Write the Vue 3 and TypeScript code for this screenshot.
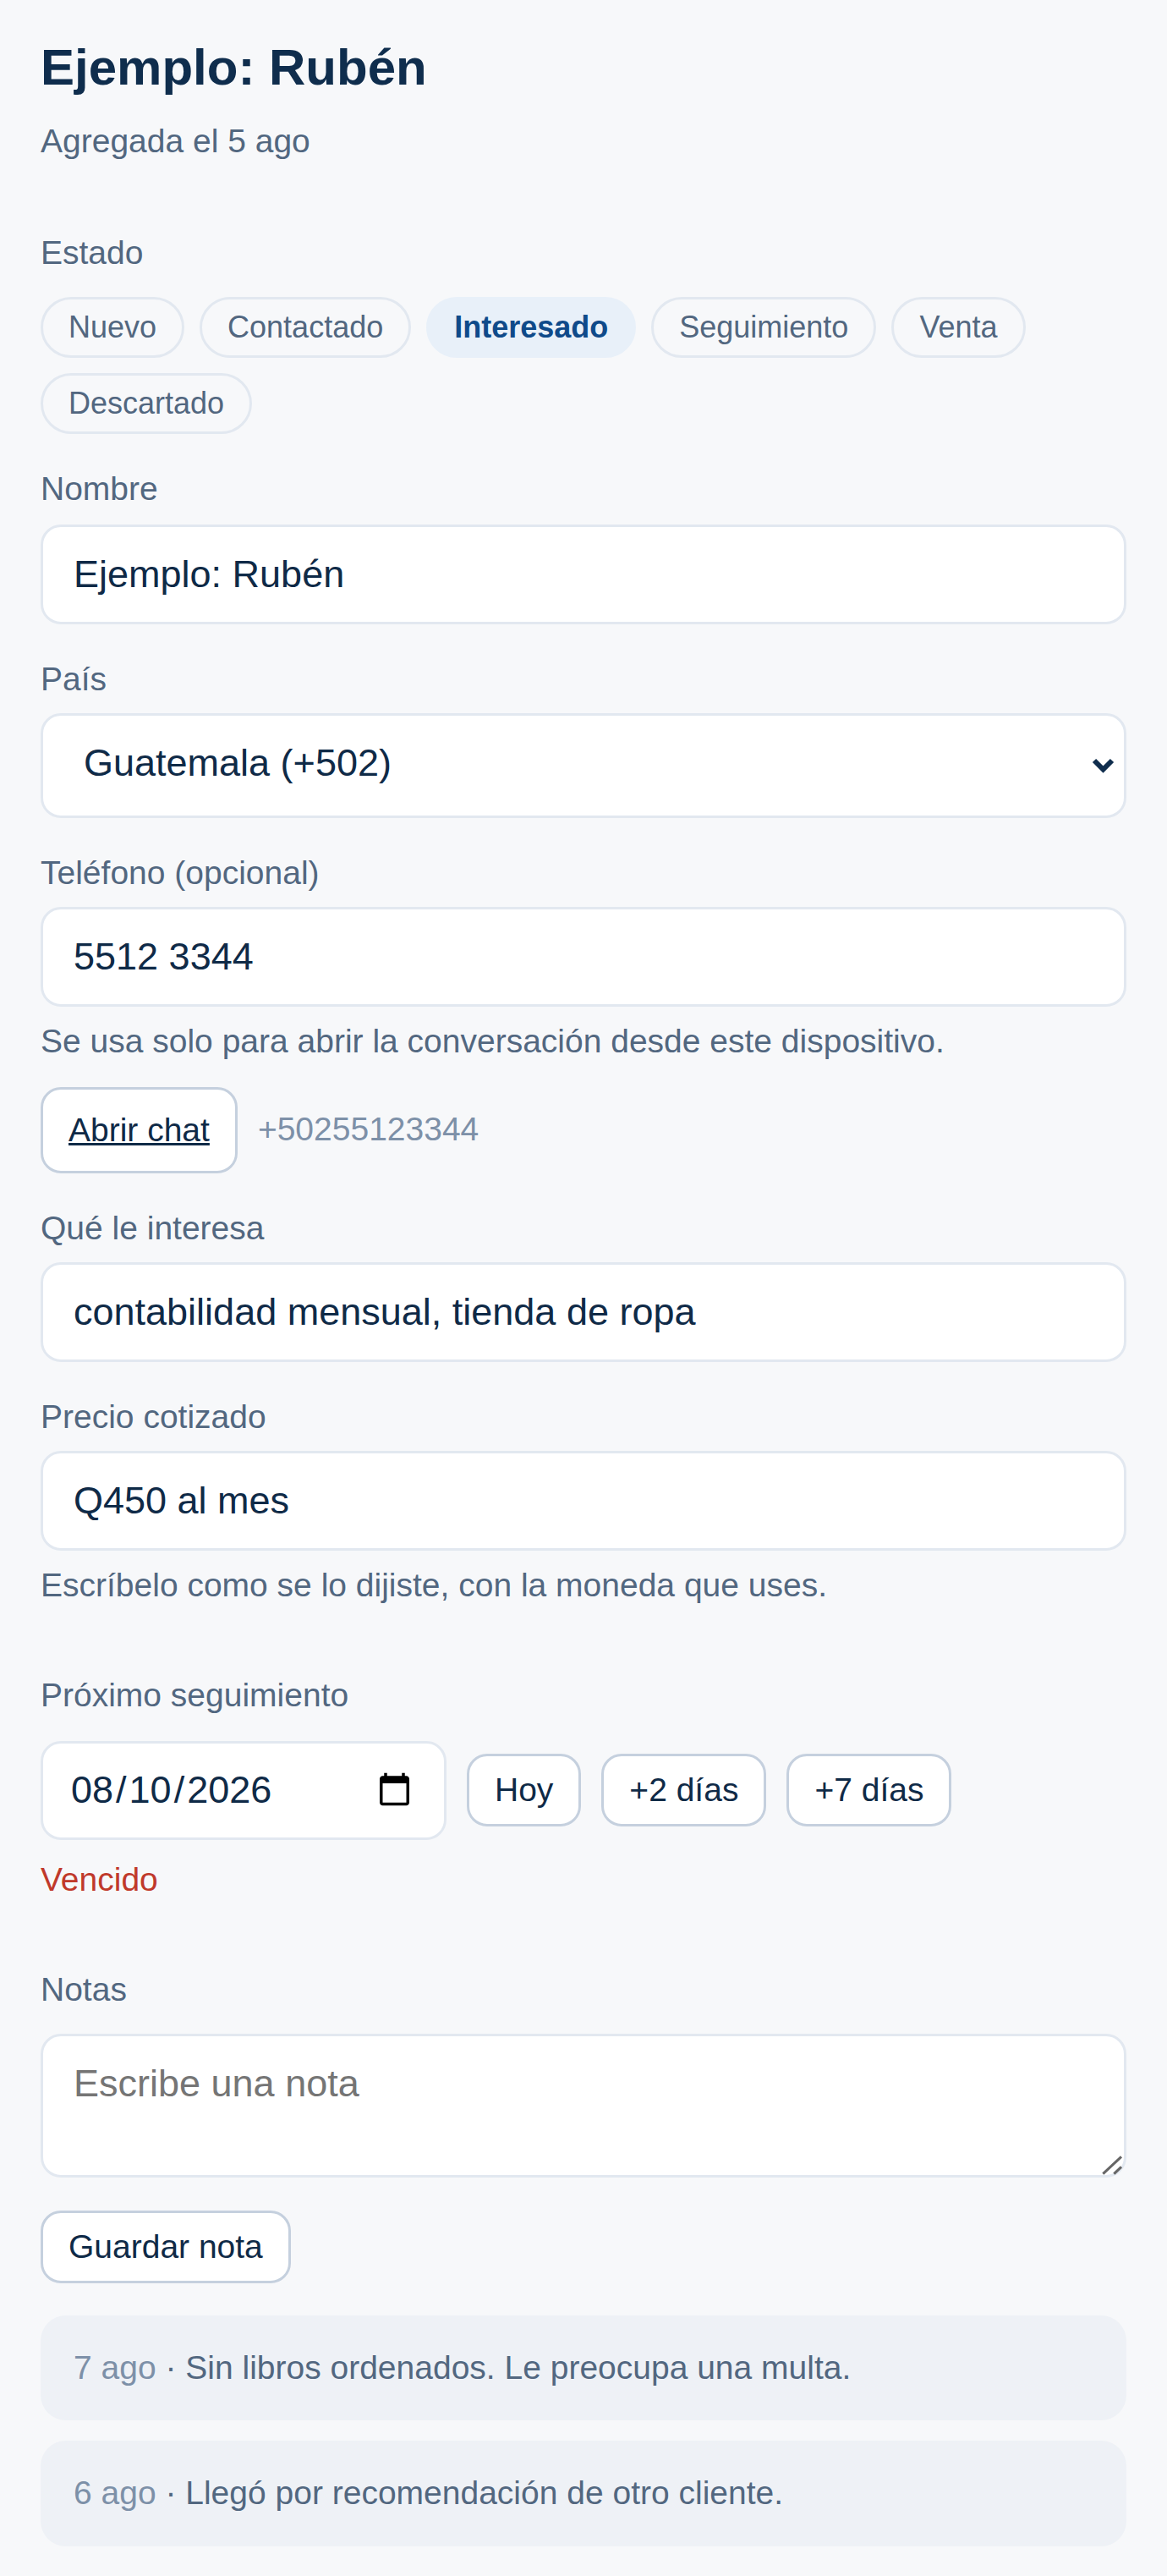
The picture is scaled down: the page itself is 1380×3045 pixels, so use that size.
<script setup lang="ts">
import { ref } from 'vue'

const estados: string[] = ['Nuevo', 'Contactado', 'Interesado', 'Seguimiento', 'Venta', 'Descartado']
const activo = ref<string>('Interesado')
const nombre = ref<string>('Ejemplo: Rubén')
const pais = ref<string>('502')
const telefono = ref<string>('5512 3344')
const interes = ref<string>('contabilidad mensual, tienda de ropa')
const precio = ref<string>('Q450 al mes')
const fecha = ref<string>('2026-08-10')
const nota = ref<string>('')
const notas = [
  { fecha: '7 ago', texto: 'Sin libros ordenados. Le preocupa una multa.' },
  { fecha: '6 ago', texto: 'Llegó por recomendación de otro cliente.' }
]
</script>

<template>
  <main class="page">
    <h1 class="title">Ejemplo: Rubén</h1>
    <p class="subtitle">Agregada el 5 ago</p>

    <section class="section section-state">
      <div class="label section-label">Estado</div>
      <div class="chips">
        <button
          v-for="e in estados"
          :key="e"
          type="button"
          class="chip"
          :class="{ 'chip-on': e === activo }"
          @click="activo = e"
        >{{ e }}</button>
      </div>
    </section>

    <label class="field">
      <span class="label label-first">Nombre</span>
      <input v-model="nombre" class="control" type="text" />
    </label>

    <label class="field">
      <span class="label">País</span>
      <span class="select-wrap">
        <select v-model="pais" class="control control-select">
          <option value="502">Guatemala (+502)</option>
        </select>
        <svg class="select-arrow" viewBox="0 0 27 18" aria-hidden="true">
          <path d="M3 3 L13.5 13.5 L24 3" fill="none" stroke="currentColor" stroke-width="6" />
        </svg>
      </span>
    </label>

    <label class="field">
      <span class="label">Teléfono (opcional)</span>
      <input v-model="telefono" class="control" type="tel" />
    </label>
    <p class="hint">Se usa solo para abrir la conversación desde este dispositivo.</p>
    <div class="chat-row">
      <a class="btn btn-link" href="#" @click.prevent>Abrir chat</a>
      <span class="phone">+50255123344</span>
    </div>

    <label class="field">
      <span class="label">Qué le interesa</span>
      <input v-model="interes" class="control" type="text" />
    </label>

    <label class="field">
      <span class="label">Precio cotizado</span>
      <input v-model="precio" class="control" type="text" />
    </label>
    <p class="hint">Escríbelo como se lo dijiste, con la moneda que uses.</p>

    <section class="section">
      <div class="label section-label section-label-date">Próximo seguimiento</div>
      <div class="date-row">
        <input v-model="fecha" class="control control-date" type="date" />
        <button type="button" class="btn">Hoy</button>
        <button type="button" class="btn">+2 días</button>
        <button type="button" class="btn">+7 días</button>
      </div>
      <p class="overdue">Vencido</p>
    </section>

    <section class="section">
      <div class="label section-label">Notas</div>
      <div class="area-wrap">
        <textarea v-model="nota" class="control control-area" rows="2" placeholder="Escribe una nota"></textarea>
        <svg class="area-grip" viewBox="0 0 30 30" aria-hidden="true">
          <path d="M2.3 25.7 L24 5.3 M15.3 25.7 L24 17.3" fill="none" stroke="#666" stroke-width="3" />
        </svg>
      </div>
      <button type="button" class="btn save">Guardar nota</button>
      <ul class="notes">
        <li v-for="n in notas" :key="n.fecha" class="note">
          <span class="note-date">{{ n.fecha }}</span> · {{ n.texto }}
        </li>
      </ul>
    </section>
  </main>
</template>

<style scoped>
.page {
  zoom: 3;
  width: 460px;
  box-sizing: border-box;
  padding: 12px 16px;
  font-family: "Liberation Sans", Arial, sans-serif;
  font-size: 13px;
  line-height: 1.5;
  color: #0f2a47;
}
.title {
  margin: 0 0 5px;
  font-size: 20px;
  font-weight: 700;
  line-height: 29px;
  color: #0f2d4d;
}
.subtitle {
  margin: 0;
  color: #526780;
}
.section {
  margin-top: 24px;
}
.section-state {
  margin-top: 24.5px;
}
.label {
  display: block;
  margin-bottom: 4px;
  line-height: 19px;
  color: #526780;
}
.label-first {
  margin-bottom: 4.5px;
}
.section-label {
  margin-bottom: 8px;
}
.section-label-date {
  margin-bottom: 8.5px;
}
.chips {
  display: flex;
  flex-wrap: wrap;
  gap: 6px;
}
.chip {
  padding: 4px 10px;
  border: 1px solid #e2e8f0;
  border-radius: 999px;
  background: transparent;
  color: #526780;
  font-family: inherit;
  font-size: 12px;
}
.chip-on {
  border-color: #e8f0f9;
  background: #e8f0f9;
  color: #0f4a8a;
  font-weight: 700;
}
.field {
  display: block;
  margin-top: 12px;
}
.control {
  display: block;
  box-sizing: border-box;
  width: 100%;
  padding: 10px 12px;
  border: 1px solid #e2e8f0;
  border-radius: 8px;
  background: #fff;
  color: #0f2a47;
  font-family: inherit;
  font-size: 15px;
}
.select-wrap {
  position: relative;
  display: block;
  color: #0f2d4d;
}
.control-select {
  appearance: none;
  height: 41.5px;
  padding: 9px 12px 11px 16px;
}
.select-arrow {
  position: absolute;
  top: 50%;
  right: 4.67px;
  width: 9px;
  height: 6px;
  margin-top: -3px;
  pointer-events: none;
}
.control-date {
  flex: none;
  width: 160px;
  height: 39px;
  padding: 9px 10px;
}
.area-wrap {
  position: relative;
}
.control-area {
  resize: none;
}
.area-grip {
  position: absolute;
  right: 0;
  bottom: 0;
  width: 10px;
  height: 10px;
  pointer-events: none;
}
.hint {
  margin: 4px 0 0;
  color: #526780;
}
.chat-row {
  display: flex;
  align-items: center;
  gap: 8px;
  margin-top: 8px;
}
.btn {
  padding: 6px 10px;
  border: 1px solid #c5d0de;
  border-radius: 8px;
  background: #fff;
  color: #0f2a47;
  font-family: inherit;
  font-size: 13px;
}
.btn-link {
  display: inline-block;
  line-height: 20px;
  text-decoration: underline;
}
.phone {
  color: #7d90a8;
}
.date-row {
  display: flex;
  align-items: center;
  gap: 8px;
}
.overdue {
  margin: 6px 0 0;
  color: #c0392b;
}
.save {
  display: block;
  margin-top: 13px;
}
.notes {
  display: flex;
  flex-direction: column;
  gap: 8px;
  margin: 12.5px 0 0;
  padding: 0;
  list-style: none;
}
.note {
  padding: 11px 13px;
  border-radius: 10px;
  background: #eef1f6;
  color: #526780;
}
.note-date {
  color: #7d90a8;
}
</style>

<style>
html,
body {
  margin: 0;
  background: #f7f8fa;
}
</style>
